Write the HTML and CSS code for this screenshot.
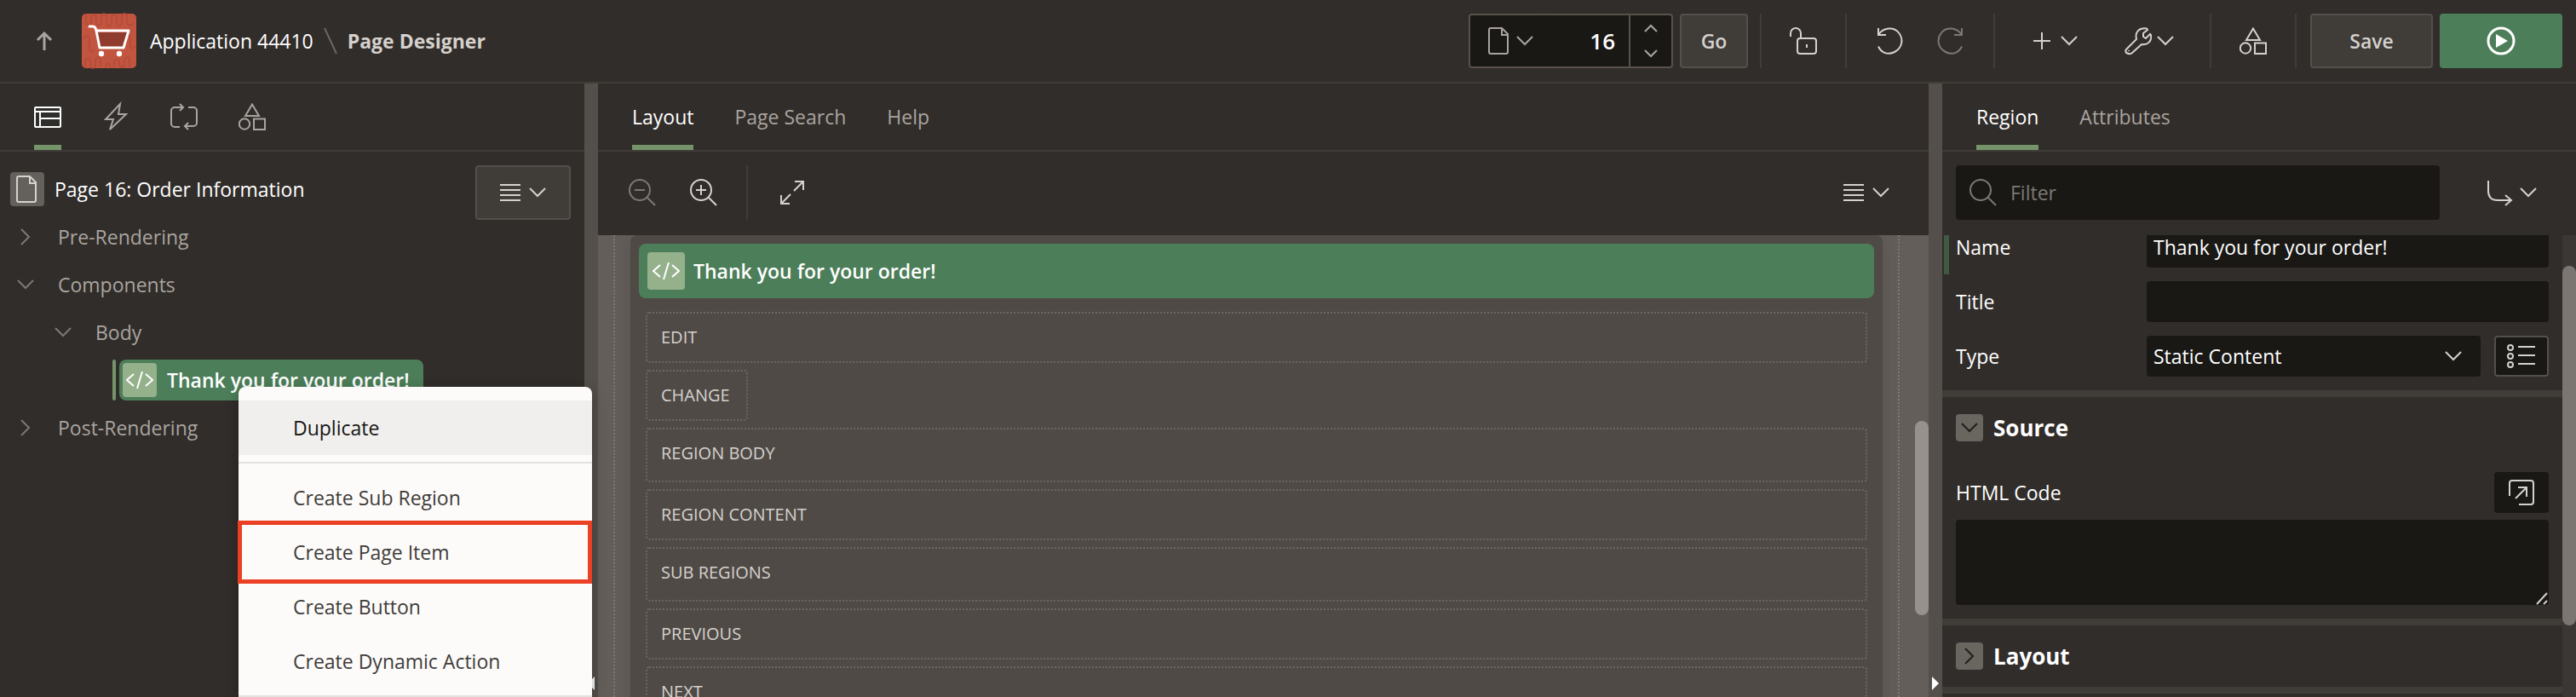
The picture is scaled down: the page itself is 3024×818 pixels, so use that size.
FILE: index.html
```html
<!DOCTYPE html>
<html lang="en">
<head>
<meta charset="utf-8">
<title>Page Designer</title>
<link rel="stylesheet" href="styles.css">
</head>
<body>
<svg class="sprite" aria-hidden="true">
  <symbol id="i-down" viewBox="0 0 20 12"><path d="M1 1l9 9 9-9"/></symbol>
  <symbol id="i-right" viewBox="0 0 12 20"><path d="M1 1l9 9-9 9"/></symbol>
  <symbol id="i-lines" viewBox="0 0 24 20"><path d="M0 1h24M0 7h24M0 13h24M0 19h24"/></symbol>
  <symbol id="i-file" viewBox="0 0 32 32"><path d="M6 1h13l7 7v21a2 2 0 0 1-2 2H6a2 2 0 0 1-2-2V3a2 2 0 0 1 2-2zM19 1v8h7"/></symbol>
  <symbol id="i-shapes" viewBox="0 0 32 32"><path d="M16 1.500L24 15H8zM18 18.500h13v12.500H18z"/><circle cx="7" cy="24.500" r="6.200"/></symbol>
  <symbol id="i-code" viewBox="0 0 32 20"><path d="M9 3L1 10l8 7M23 3l8 7-8 7M19 0l-6 20"/></symbol>
</svg>

<header class="topbar">
  <button class="up" aria-label="Up"><svg width="20" height="22"><path d="M10 22V2M2 10l8-8 8 8"/></svg></button>
  <svg class="app-logo" viewBox="0 0 64 64" aria-hidden="true">
    <rect width="64" height="64" rx="5" fill="#c25540"/>
    <path d="M5 0v10q3 8 6 0V4q3-6 6 0v6q3 8 6 0V3q3-6 6 0v8q3 8 6 0V4q3-6 6 0v7q3 8 6 0V2q3-4 6 0v9q3 6 8 0M2 30q4-8 7 0v12q3 6 5 0M50 26q4-6 7 2v10q3 5 6 0M4 64v-9q3-6 6 0v6q3 6 6 0v-6q3-8 6 0v7M28 63q3-9 6 0M38 64v-8q3-6 6 0v4q3 6 6 0v-6q3-6 6 0v9" fill="none" stroke="#b64c39" stroke-width="2"/>
    <path d="M16 22h38l-5 18H21z" fill="#8f3b2d"/>
    <path d="M9 15h4q3 0 4 5l4 20h28l6-20H17" fill="none" stroke="#fff" stroke-width="3" stroke-linejoin="round" stroke-linecap="round"/>
    <circle cx="23" cy="47" r="3.200" fill="#fff"/><circle cx="44" cy="47" r="3.200" fill="#fff"/>
  </svg>
  <nav class="crumbs" aria-label="Breadcrumb">
    <a href="#">Application 44410</a>
    <svg class="slash" width="16" height="32"><path d="M1 1l14 30"/></svg>
    <strong>Page Designer</strong>
  </nav>

  <div class="page-picker">
    <button class="picker-menu" aria-label="Page list"><svg width="32" height="32"><use href="#i-file"/></svg><svg width="20" height="12"><use href="#i-down"/></svg></button>
    <input type="text" value="16" aria-label="Page number">
    <div class="spin">
      <button aria-label="Next page"><svg width="14" height="8"><path d="M0 8l7-7 7 7"/></svg></button>
      <button aria-label="Previous page"><svg width="14" height="8"><path d="M0 0l7 7 7-7"/></svg></button>
    </div>
  </div>
  <button class="btn go">Go</button>
  <div class="tools">
    <button aria-label="Unlocked"><svg width="32" height="32"><path d="M1 11V7a6 6 0 0 1 12 0v5"/><rect x="9" y="13" width="22" height="18" rx="3"/><path d="M20 20v4"/></svg></button>
  </div>
  <div class="tools wide">
    <button aria-label="Undo"><svg width="32" height="32"><path d="M2 1v8h9M2 9C8 0 20-1 26 6.500s4 18-5 22.500S5 29 2 22.500"/></svg></button>
    <button class="dim" aria-label="Redo"><svg width="32" height="32"><path d="M30 1v8h-9M30 9C24 0 12-1 6 6.500S2 24.500 11 29s16 0 19-6.500"/></svg></button>
  </div>
  <div class="tools menus">
    <button aria-label="Create"><svg width="20" height="20"><path d="M10 0v20M0 10h20"/></svg><svg width="20" height="12"><use href="#i-down"/></svg></button>
    <button class="utilities" aria-label="Utilities"><svg width="32" height="32"><path d="M2 26L14 14C12 6 17 0 26 1.500L27 3l-5 4v4l3 2 5-5 1 1c1 8-4 12-11 11L9 30c-2 2-5 1-7 0-1-2-1-3 0-4zM5 27v1"/></svg><svg width="20" height="12"><use href="#i-down"/></svg></button>
  </div>
  <div class="tools">
    <button aria-label="Shared components"><svg width="32" height="32"><use href="#i-shapes"/></svg></button>
  </div>
  <div class="actions">
    <button class="btn save">Save</button>
    <button class="btn run" aria-label="Save and run page"><svg width="32" height="32"><circle cx="16" cy="16" r="15"/><path class="solid" d="M10 8l14 8-14 8z"/></svg></button>
  </div>
</header>

<main class="designer">
  <section class="pane left">
    <div class="tabs icons" role="tablist">
      <button class="tab on" role="tab" aria-label="Rendering"><svg width="32" height="32"><rect x="1" y="5" width="30" height="23" rx="1"/><path d="M1 10h30M7 10v18M7 18h24"/></svg></button>
      <button class="tab" role="tab" aria-label="Dynamic actions"><svg width="32" height="32"><path d="M21 1L4 19h9L9 31l19-18H19z"/></svg></button>
      <button class="tab" role="tab" aria-label="Processing"><svg width="32" height="32"><path d="M11 28H5a4 4 0 0 1-4-4V9a4 4 0 0 1 4-4h10M11 1l4 4-4 4M21 5h6a4 4 0 0 1 4 4v14a4 4 0 0 1-4 4H17M21 23l-4 4 4 4"/></svg></button>
      <button class="tab" role="tab" aria-label="Page shared components"><svg width="32" height="32"><use href="#i-shapes"/></svg></button>
    </div>
    <div class="tree-area">
      <ul class="tree">
        <li class="node page"><span class="tile grey"><svg width="32" height="32"><use href="#i-file"/></svg></span>Page 16: Order Information</li>
        <li class="node"><button class="toggle" aria-label="Expand"><svg width="12" height="20"><use href="#i-right"/></svg></button>Pre-Rendering</li>
        <li class="node"><button class="toggle" aria-label="Collapse"><svg width="20" height="12"><use href="#i-down"/></svg></button>Components</li>
        <li class="node level-1"><button class="toggle" aria-label="Collapse"><svg width="20" height="12"><use href="#i-down"/></svg></button>Body</li>
        <li class="node level-2"><span class="mark"></span><span class="chosen"><span class="tile green"><svg width="32" height="20"><use href="#i-code"/></svg></span>Thank you for your order!</span></li>
        <li class="node"><button class="toggle" aria-label="Expand"><svg width="12" height="20"><use href="#i-right"/></svg></button>Post-Rendering</li>
      </ul>
      <button class="btn tree-menu" aria-label="Tree menu"><svg width="24" height="20"><use href="#i-lines"/></svg><svg width="20" height="12"><use href="#i-down"/></svg></button>
    </div>
  </section>

  <div class="splitter"><svg width="8" height="16"><path d="M8 0v16L0 8z"/></svg></div>

  <section class="pane middle">
    <div class="tabs" role="tablist">
      <button class="tab on" role="tab">Layout</button>
      <button class="tab" role="tab">Page Search</button>
      <button class="tab" role="tab">Help</button>
    </div>
    <div class="toolbar">
      <button class="dim" aria-label="Zoom out"><svg width="32" height="32"><circle cx="13" cy="13" r="12"/><path d="M22 22l9 9M7 13h12"/></svg></button>
      <button aria-label="Zoom in"><svg width="32" height="32"><circle cx="13" cy="13" r="12"/><path d="M22 22l9 9M7 13h12M13 7v12"/></svg></button>
      <span class="rule"></span>
      <button aria-label="Expand"><svg width="28" height="28"><path d="M16 12L27 1M17 1h10v10M12 16L1 27M1 17v10h10"/></svg></button>
      <button class="layout-menu" aria-label="Layout menu"><svg width="24" height="20"><use href="#i-lines"/></svg><svg width="20" height="12"><use href="#i-down"/></svg></button>
    </div>
    <div class="canvas">
      <div class="guides">
        <div class="region">
          <div class="region-title"><span class="tile green big"><svg width="32" height="20"><use href="#i-code"/></svg></span>Thank you for your order!</div>
          <div class="slots">
            <div class="slot">EDIT</div>
            <div class="slot fit">CHANGE</div>
            <div class="slot tall">REGION BODY</div>
            <div class="slot">REGION CONTENT</div>
            <div class="slot tall">SUB REGIONS</div>
            <div class="slot">PREVIOUS</div>
            <div class="slot">NEXT</div>
          </div>
        </div>
      </div>
      <span class="thumb"></span>
    </div>
  </section>

  <div class="splitter"><svg width="8" height="16"><path d="M0 0v16l8-8z"/></svg></div>

  <section class="pane right">
    <div class="tabs" role="tablist">
      <button class="tab on" role="tab">Region</button>
      <button class="tab" role="tab">Attributes</button>
    </div>
    <div class="filter-row">
      <label class="filter"><svg width="32" height="32"><circle cx="13" cy="13" r="12"/><path d="M22 22l9 9"/></svg><input type="text" placeholder="Filter" aria-label="Filter"></label>
      <button class="goto" aria-label="Go to group"><svg width="30" height="32"><path d="M1 2v12q0 11 11 11h15M21 19l7 6-7 6"/></svg><svg width="20" height="12"><use href="#i-down"/></svg></button>
    </div>
    <div class="props">
      <div class="groups">
        <div class="group first">
          <div class="field changed"><label for="name">Name</label><input id="name" type="text" value="Thank you for your order!"></div>
          <div class="field"><label for="title">Title</label><input id="title" type="text"></div>
          <div class="field"><label for="type">Type</label>
            <div class="with-button">
              <div class="select"><select id="type"><option>Static Content</option></select><svg width="20" height="12"><use href="#i-down"/></svg></div>
              <button class="square outlined" aria-label="Quick pick"><svg width="32" height="28"><circle cx="3" cy="4" r="3"/><circle cx="3" cy="14" r="3"/><circle cx="3" cy="24" r="3"/><path d="M12 3h20M12 13h20M12 23h20"/></svg></button>
            </div>
          </div>
        </div>
        <div class="group">
          <h2><button class="fold" aria-label="Collapse"><svg width="20" height="12"><use href="#i-down"/></svg></button>Source</h2>
          <div class="code-label"><label for="html">HTML Code</label><button class="square" aria-label="Code editor"><svg width="30" height="30"><path d="M1 19V4a3 3 0 0 1 3-3h22a3 3 0 0 1 3 3v22a3 3 0 0 1-3 3H12M8 22L21 9M11 9h10v11"/></svg></button></div>
          <div class="code-box"><textarea id="html"></textarea><svg width="16" height="16"><path d="M2 15L14 2M10 15l4-4"/></svg></div>
        </div>
        <div class="group">
          <h2><button class="fold" aria-label="Expand"><svg width="12" height="20"><use href="#i-right"/></svg></button>Layout</h2>
        </div>
        <div class="group"></div>
      </div>
      <div class="track"><span class="thumb"></span></div>
    </div>
  </section>
</main>

<div class="menu" role="menu">
  <button class="item current" role="menuitem">Duplicate</button>
  <hr>
  <button class="item" role="menuitem">Create Sub Region</button>
  <button class="item marked" role="menuitem">Create Page Item</button>
  <button class="item" role="menuitem">Create Button</button>
  <button class="item" role="menuitem">Create Dynamic Action</button>
  <hr>
</div>
</body>
</html>
```
FILE: styles.css
```css
:root {
  --bg: #312d2a;
  --line: #403c38;
  --edge: #544f4a;
  --field: #191815;
  --green: #4c7e59;
  --muted: #a9a49f;
  --soft: #d5d1cd;
}

* { box-sizing: border-box; }

body {
  margin: 0;
  height: 100vh;
  display: flex;
  flex-direction: column;
  overflow: hidden;
  background: var(--bg);
  color: #fff;
  font: 500 23px/32px "Open Sans", "Noto Sans", sans-serif;
}

button, input, select, textarea { font: inherit; color: inherit; }
button { border: 0; padding: 0; background: none; display: flex; align-items: center; justify-content: center; }
svg { flex: none; fill: none; stroke: currentColor; stroke-width: 2; overflow: visible; }
.solid { fill: currentColor; stroke: none; }
.sprite { display: none; }
input, select, textarea { border: 0; outline: 0; background: var(--field); border-radius: 4px; min-width: 0; }

/* Top bar */
.topbar { flex: none; display: flex; align-items: center; padding: 16px; border-bottom: 2px solid var(--line); color: var(--soft); }
.up { width: 72px; color: var(--muted); margin-right: 8px; }
.up svg { stroke-width: 3; }
.app-logo { width: 64px; height: 64px; stroke: none; }
.crumbs { display: flex; align-items: center; gap: 12px; margin: 0 auto 0 16px; }
.crumbs a { color: #fff; text-decoration: none; }
.slash { color: #6b6661; }

.page-picker { display: flex; width: 240px; height: 64px; border: 2px solid #585149; border-radius: 4px; background: var(--field); color: var(--muted); }
.picker-menu { width: 76px; gap: 4px; margin-left: 8px; }
.page-picker input { flex: 1; width: 0; text-align: right; padding: 0 16px; font-size: 26px; font-weight: 600; color: #fff; }
.spin { width: 50px; border-left: 2px solid #585149; display: grid; grid-template-rows: 1fr 1fr; }

.btn { height: 64px; border: 2px solid var(--edge); border-radius: 4px; background: #403c38; color: var(--soft); font-weight: 600; }
.go { width: 80px; margin: 0 14px 0 8px; }
.save, .run { width: 144px; }
.run { background: var(--green); border-color: var(--green); color: #fff; }
.run svg { stroke-width: 3; }
.tools { display: flex; height: 64px; padding: 0 16px; border-left: 2px solid var(--line); }
.tools button { width: 66px; }
.tools.wide button { width: 70px; }
.tools.menus button { width: 110px; gap: 12px; }
.tools.menus .utilities { gap: 6px; }
.dim { color: #7d7874; }
.actions { display: flex; gap: 8px; padding-left: 16px; border-left: 2px solid var(--line); }

/* Three panes with splitters between them */
.designer { flex: 1; min-height: 0; display: grid; grid-template-columns: minmax(0, 686fr) 16px minmax(0, 1562fr) 16px minmax(0, 744fr); }
.pane { display: flex; flex-direction: column; min-height: 0; overflow: hidden; }
.splitter { background: var(--edge); display: flex; align-items: flex-end; justify-content: center; padding-bottom: 8px; }
.splitter svg { fill: #fff; stroke: none; }

.tabs { flex: none; display: flex; gap: 48px; height: 80px; padding: 0 40px; border-bottom: 2px solid var(--line); }
.tab { color: var(--muted); border-top: 6px solid transparent; border-bottom: 6px solid transparent; }
.tab.on { color: #fff; border-bottom-color: #759469; }

/* Component tree */
.tree-area { display: flex; align-items: flex-start; padding: 16px 16px 0 0; }
.tree { flex: 1; list-style: none; margin: 0; padding: 0; color: var(--muted); }
.node { display: flex; align-items: center; height: 56px; padding-left: 14px; }
.page { padding-left: 12px; gap: 12px; color: #fff; }
.toggle { width: 32px; height: 32px; margin-right: 22px; color: #7d7874; }
.level-1 { padding-left: 58px; }
.level-2 { padding-left: 132px; gap: 4px; }
.mark { width: 4px; height: 48px; border-radius: 2px; background: #759469; }
.chosen { display: flex; align-items: center; gap: 12px; height: 48px; padding: 0 16px 0 4px; border-radius: 8px; background: var(--green); color: #fff; font-weight: 600; }
.tile { display: grid; place-items: center; width: 40px; height: 40px; border-radius: 4px; }
.grey { background: #64605b; color: var(--soft); }
.green { background: #95b18c; color: #fff; }
.big { width: 44px; height: 44px; }
.tree-menu { width: 112px; gap: 10px; }

/* Layout pane */
.toolbar { flex: none; display: flex; align-items: center; height: 98px; padding: 0 46px 2px 36px; color: var(--soft); }
.toolbar button { margin-right: 40px; }
.rule { width: 2px; height: 64px; margin: 0 38px 0 -6px; background: var(--line); }
.toolbar .layout-menu { margin: 0 0 0 auto; gap: 10px; }
.canvas { flex: 1; min-height: 0; position: relative; display: flex; overflow: hidden; background: #635e59; }
.guides { flex: 1; margin: 0 34px 0 18px; padding: 0 18px; border: dotted #7d7874; border-width: 0 2px; }
.region { min-height: 100%; padding: 10px; border-radius: 8px 8px 0 0; background: #4f4a46; box-shadow: 0 0 24px rgba(0, 0, 0, .12); }
.region-title { display: flex; align-items: center; gap: 10px; height: 64px; padding: 0 10px; border-radius: 8px; background: var(--green); font-weight: 600; }
.slots { display: flex; flex-direction: column; gap: 8px; padding: 16px 8px; font-size: 20px; line-height: 28px; color: var(--soft); }
.slot { padding: 14px 16px; border: 2px dotted #6c6762; border-radius: 4px; }
.slot.tall { padding-bottom: 18px; }
.slot.fit { align-self: flex-start; min-width: 120px; }
.canvas .thumb { position: absolute; right: 0; top: 218px; width: 16px; height: 228px; border-radius: 8px; background: #96918c; }

/* Property editor */
.filter-row { flex: none; display: flex; gap: 40px; padding: 16px 46px 18px 16px; }
.filter { flex: 1; display: flex; align-items: center; gap: 16px; height: 64px; padding: 0 16px; border-radius: 4px; background: var(--field); color: #7d7874; }
.filter input { flex: 1; color: #fff; padding: 0; }
.filter input::placeholder { color: #7d7874; }
.goto { width: 74px; gap: 8px; color: var(--soft); justify-content: flex-end; }
.props { flex: 1; min-height: 0; display: flex; overflow: hidden; }
.groups { flex: 1; min-width: 0; }
.group { padding: 20px 16px 16px; border-top: 8px solid var(--line); }
.group.first { border: 0; padding-top: 0; margin-top: -10px; }
.field { display: grid; grid-template-columns: 224px 1fr; align-items: center; margin-bottom: 16px; }
.changed { box-shadow: -8px 8px 0 0 var(--bg), -14px 8px 0 0 #3f5a43; background: var(--bg); }
.field > input, .select select { height: 48px; padding: 0 8px; }
.field:last-child { margin-bottom: 0; }
.with-button { display: flex; gap: 16px; }
.select { flex: 1; display: grid; align-items: center; }
.select select { grid-area: 1 / 1; width: 100%; appearance: none; }
.select svg { grid-area: 1 / 1; justify-self: end; margin-right: 22px; color: var(--soft); pointer-events: none; }
.square { width: 64px; height: 48px; border-radius: 4px; background: var(--field); color: var(--soft); }
.outlined { border: 2px solid var(--edge); }
h2 { display: flex; align-items: center; gap: 12px; margin: 0; font-size: 26px; line-height: 32px; font-weight: 700; }
.group h2:last-child { padding-bottom: 4px; }
.fold { width: 32px; height: 32px; border-radius: 4px; background: #69655f; color: #211f1c; }
.code-label { display: flex; justify-content: space-between; align-items: center; margin: 36px 0 8px; }
.code-box { display: grid; }
.code-box > * { grid-area: 1 / 1; }
.code-box svg { place-self: end; color: var(--soft); pointer-events: none; }
textarea { display: block; width: 100%; height: 100px; padding: 8px; resize: none; }
.track { width: 16px; padding-top: 36px; background: #3b3734; }
.track .thumb { display: block; height: 422px; border-radius: 8px; background: #7b7672; }

/* Context menu */
.menu { position: absolute; left: 280px; top: 454px; width: 415px; padding-top: 16px; border-radius: 8px 8px 0 0; background: #fcfbfa; box-shadow: 0 4px 16px rgba(0, 0, 0, .3); }
.item { width: 100%; height: 64px; padding: 0 64px; justify-content: flex-start; color: #3f3c39; position: relative; }
.current { background: #f0efee; color: #161513; }
.menu hr { margin: 8px 0; border: 0; height: 2px; background: #e4e2e0; }
.menu hr:last-child { margin-bottom: 0; }
.marked::after { content: ""; position: absolute; inset: -5px 0 -5px -1px; border: 5px solid #ea4025; }
```
